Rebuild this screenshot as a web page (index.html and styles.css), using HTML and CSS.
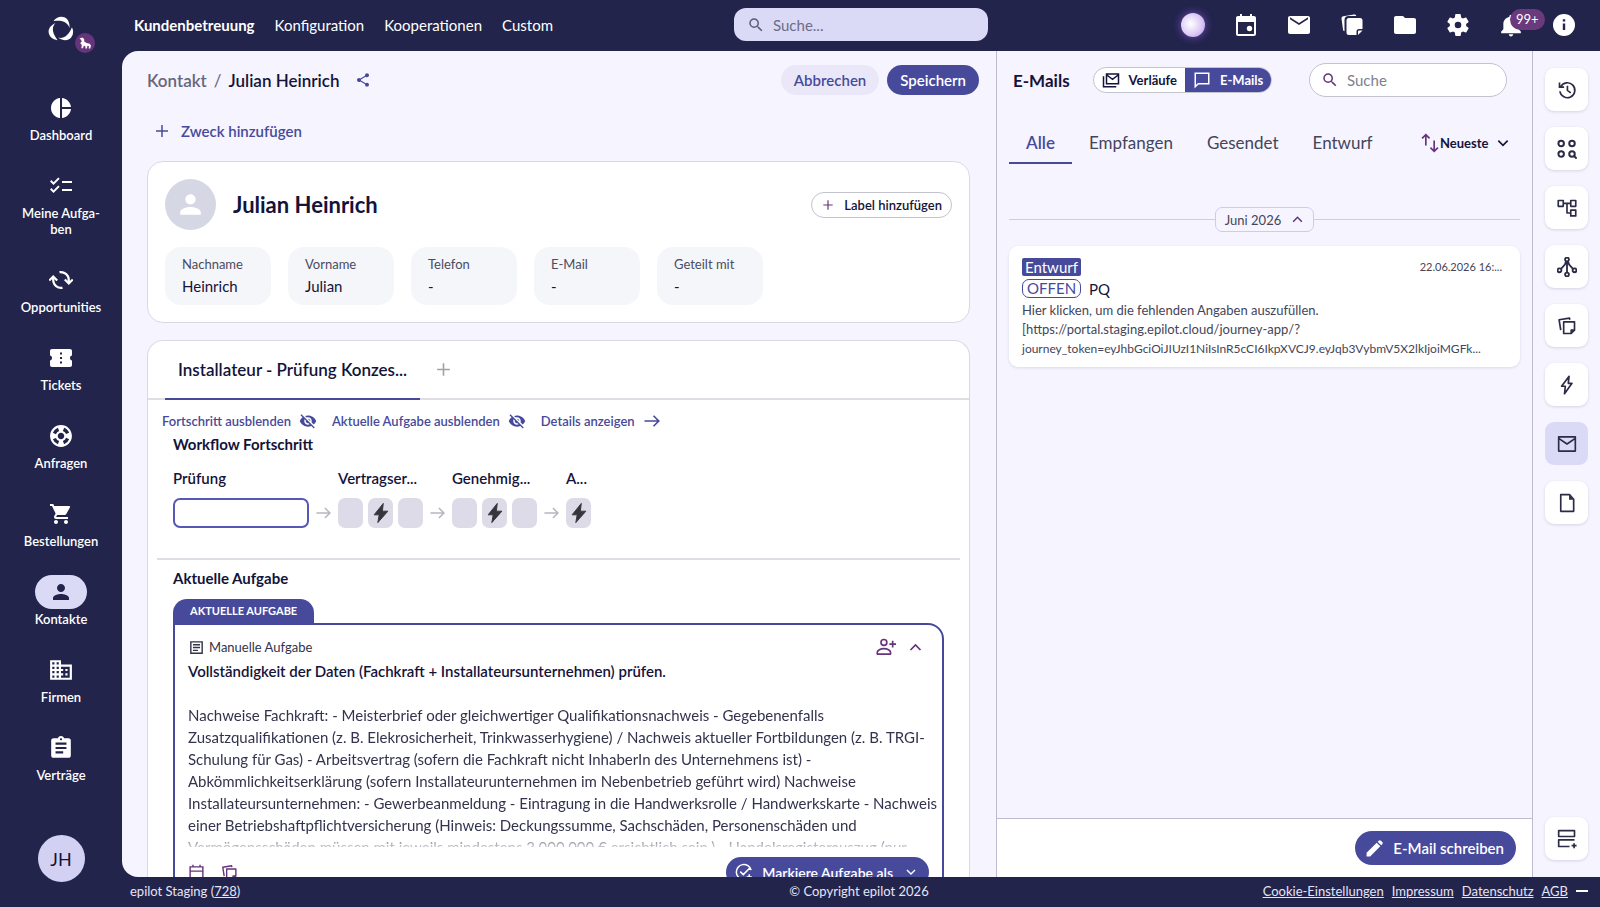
FILE: index.html
```html
<!DOCTYPE html>
<html lang="de">

<head>
    <meta charset="UTF-8">
    <meta name="viewport" content="width=device-width, initial-scale=1.0">
    <title>Julian Heinrich</title>

    <link rel="stylesheet" href="styles.css">
</head>

<body>

    <!-- Icons -->
    <svg class="sprite" aria-hidden="true">
        <symbol id="i-pie" viewBox="0 0 24 24"><path d="M11 2v20c-5.07-.5-9-4.79-9-10s3.93-9.5 9-10zm2.03 0v8.99H22c-.47-4.74-4.24-8.52-8.97-8.99zm0 11.01V22c4.74-.47 8.5-4.25 8.97-8.99h-8.97z"/></symbol>
        <symbol id="i-checklist" viewBox="0 0 24 24"><path d="M23 7h-10v2h10V7zm0 8h-10v2h10v-2zM4.540 11L1 7.460l1.410-1.410 2.120 2.120 4.740-4.740 1.410 1.410L4.540 11zm0 8L1 15.460l1.410-1.410 2.120 2.120 4.740-4.740 1.410 1.410L4.540 19z"/></symbol>
        <symbol id="i-sync" viewBox="0 0 24 24"><path fill="none" stroke="currentColor" stroke-width="2.200" d="M10.500 4.200A8 8 0 0 1 19.800 12v3M15.800 11.500l4 4 4-4M13.500 19.800A8 8 0 0 1 4.200 12V9M.2 12.500l4-4 4 4"/></symbol>
        <symbol id="i-ticket" viewBox="0 0 24 24"><path d="M23 9.500V5c0-1.100-.9-2-2-2H3c-1.100 0-2 .9-2 2v4.500c1.100 0 2 1.100 2 2.500s-.9 2.500-2 2.500V19c0 1.100.9 2 2 2h18c1.100 0 2-.9 2-2v-4.500c-1.100 0-2-1.100-2-2.500s.9-2.500 2-2.500zM13 17.500h-2v-2h2v2zm0-4.500h-2v-2h2v2zm0-4.500h-2v-2h2v2z"/></symbol>
        <symbol id="i-support" viewBox="1 1 22 22"><path fill-rule="evenodd" d="M12 2C6.480 2 2 6.480 2 12s4.480 10 10 10 10-4.480 10-10S17.520 2 12 2zm7.460 7.120l-2.780 1.150a4.980 4.980 0 0 0-2.950-2.940l1.150-2.780c2.100.8 3.770 2.470 4.580 4.570zM12 15c-1.660 0-3-1.340-3-3s1.340-3 3-3 3 1.340 3 3-1.340 3-3 3zM9.130 4.540l1.170 2.780a5 5 0 0 0-2.980 2.970L4.540 9.130a7.980 7.980 0 0 1 4.590-4.590zM4.540 14.870l2.780-1.150a4.970 4.970 0 0 0 2.970 2.960l-1.170 2.780a7.990 7.990 0 0 1-4.580-4.590zm10.340 4.590l-1.150-2.780a4.980 4.980 0 0 0 2.950-2.970l2.780 1.170a8.010 8.010 0 0 1-4.580 4.580z"/></symbol>
        <symbol id="i-cart" viewBox="0 0 24 24"><path d="M7 18c-1.100 0-1.990.9-1.990 2S5.900 22 7 22s2-.9 2-2-.9-2-2-2zM1 2v2h2l3.600 7.590-1.350 2.450c-.16.28-.25.61-.25.96 0 1.100.9 2 2 2h12v-2H7.420c-.14 0-.25-.11-.25-.25l.03-.12.9-1.630h7.450c.75 0 1.410-.41 1.750-1.030l3.580-6.490A1 1 0 0 0 20 4H5.210l-.94-2H1zm16 16c-1.100 0-1.990.9-1.990 2s.89 2 1.990 2 2-.9 2-2-.9-2-2-2z"/></symbol>
        <symbol id="i-person" viewBox="0 0 24 24"><path d="M12 12c2.210 0 4-1.790 4-4s-1.790-4-4-4-4 1.790-4 4 1.790 4 4 4zm0 2c-2.670 0-8 1.340-8 4v2h16v-2c0-2.660-5.330-4-8-4z"/></symbol>
        <symbol id="i-building" viewBox="1 1 22 22"><path d="M12 7V3H2v18h20V7H12zM6 19H4v-2h2v2zm0-4H4v-2h2v2zm0-4H4V9h2v2zm0-4H4V5h2v2zm4 12H8v-2h2v2zm0-4H8v-2h2v2zm0-4H8V9h2v2zm0-4H8V5h2v2zm10 12h-8v-2h2v-2h-2v-2h2v-2h-2V9h8v10zm-2-8h-2v2h2v-2zm0 4h-2v2h2v-2z"/></symbol>
        <symbol id="i-clipboard" viewBox="1 1 22 22"><path d="M19 3h-4.180C14.400 1.840 13.300 1 12 1s-2.400.84-2.820 2H5c-1.100 0-2 .9-2 2v14c0 1.100.9 2 2 2h14c1.100 0 2-.9 2-2V5c0-1.100-.9-2-2-2zm-7 0c.55 0 1 .45 1 1s-.45 1-1 1-1-.45-1-1 .45-1 1-1zm2 14H7v-2h7v2zm3-4H7v-2h10v2zm0-4H7V7h10v2z"/></symbol>
        <symbol id="i-search" viewBox="0 0 24 24"><path d="M15.500 14h-.79l-.28-.27A6.470 6.470 0 0 0 16 9.500 6.500 6.500 0 1 0 9.500 16c1.610 0 3.090-.59 4.230-1.570l.27.28v.79l5 4.990L20.490 19l-4.990-5zm-6 0C7.010 14 5 11.990 5 9.500S7.010 5 9.500 5 14 7.010 14 9.500 11.990 14 9.500 14z"/></symbol>
        <symbol id="i-event" viewBox="0 0 24 24"><path d="M20 3h-2V1h-2v2H8V1H6v2H4c-1.100 0-2 .9-2 2v16c0 1.100.9 2 2 2h16c1.100 0 2-.9 2-2V5c0-1.100-.9-2-2-2zm0 18H4V9h16v12z"/><circle cx="15.500" cy="15.500" r="2.700"/></symbol>
        <symbol id="i-mail" viewBox="0 0 24 24"><path d="M21 3H3C1.900 3 1 3.900 1 5v14c0 1.100.9 2 2 2h18c1.100 0 2-.9 2-2V5c0-1.100-.9-2-2-2zm0 3.200l-9 5.800-9-5.800V4.300l9 5.800 9-5.800v1.900z"/></symbol>
        <symbol id="i-notes" viewBox="0 0 24 24"><path d="M1.500 5.500c0-1.200.6-2 1.800-2.200L14 1.500c1.200-.2 2.100.4 2.300 1.500H8.500A4 4 0 0 0 4.500 7v11.200c-.9-.1-1.300-.7-1.500-1.700z"/><path d="M9 5h11a2.500 2.500 0 0 1 2.500 2.500V16H19a2.500 2.500 0 0 0-2.500 2.500V22H9a2.500 2.500 0 0 1-2.500-2.500v-12A2.500 2.500 0 0 1 9 5z"/><path d="M18 22v-3.500a1 1 0 0 1 1-1h3.500z"/></symbol>
        <symbol id="i-folder" viewBox="0 0 24 24"><path d="M10 3H3c-1.100 0-2 .9-2 2v14c0 1.100.9 2 2 2h18c1.100 0 2-.9 2-2V7c0-1.100-.9-2-2-2h-9l-2-2z"/></symbol>
        <symbol id="i-gear" viewBox="1 1 22 22"><path d="M19.430 12.980c.04-.32.07-.64.07-.98s-.03-.66-.07-.98l2.110-1.650c.19-.15.24-.42.12-.64l-2-3.460c-.12-.22-.39-.3-.61-.22l-2.490 1c-.52-.4-1.080-.73-1.690-.98l-.38-2.650A.49.49 0 0 0 14 2h-4c-.25 0-.46.18-.49.42l-.38 2.650c-.61.25-1.170.59-1.690.98l-2.490-1c-.23-.09-.49 0-.61.22l-2 3.460c-.13.22-.07.49.12.64l2.110 1.650c-.04.32-.07.65-.07.98s.03.66.07.98l-2.110 1.650c-.19.15-.24.42-.12.64l2 3.460c.12.22.39.3.61.22l2.490-1c.52.4 1.080.73 1.690.98l.38 2.650c.03.24.24.42.49.42h4c.25 0 .46-.18.49-.42l.38-2.650c.61-.25 1.170-.59 1.690-.98l2.490 1c.23.09.49 0 .61-.22l2-3.460c.12-.22.07-.49-.12-.64l-2.110-1.650zM12 15a3 3 0 1 1 0-6 3 3 0 0 1 0 6z"/></symbol>
        <symbol id="i-bell" viewBox="1 1 22 22"><path d="M12 22.500c1.100 0 2-.9 2-2h-4c0 1.100.89 2 2 2zm7-6.500v-5c0-3.070-2.140-5.640-5.500-6.320V4c0-.83-.67-1.500-1.500-1.500s-1.500.67-1.500 1.500v.68C7.130 5.360 5 7.920 5 11v5l-2 2v1.500h18V18l-2-2z"/></symbol>
        <symbol id="i-info" viewBox="0 0 24 24"><path d="M12 1a11 11 0 1 0 0 22 11 11 0 0 0 0-22zm1.200 16h-2.400v-6.500h2.400V17zm0-8.500h-2.400V6.200h2.400v2.300z"/></symbol>
        <symbol id="i-share" viewBox="0 0 24 24"><path d="M18 16.080c-.76 0-1.440.3-1.960.77L8.910 12.700c.05-.23.09-.46.09-.7s-.04-.47-.09-.7l7.050-4.110c.54.5 1.250.81 2.040.81 1.660 0 3-1.340 3-3s-1.340-3-3-3-3 1.340-3 3c0 .24.04.47.09.7L8.040 9.810C7.500 9.310 6.790 9 6 9c-1.660 0-3 1.340-3 3s1.340 3 3 3c.79 0 1.500-.31 2.040-.81l7.120 4.160c-.05.21-.08.43-.08.65 0 1.610 1.310 2.920 2.920 2.920s2.920-1.310 2.920-2.920-1.310-2.920-2.920-2.920z"/></symbol>
        <symbol id="i-plus" viewBox="0 0 24 24"><path d="M20 13h-7v7h-2v-7H4v-2h7V4h2v7h7v2z"/></symbol>
        <symbol id="i-eye-off" viewBox="0 0 24 24"><path d="M12 7c2.760 0 5 2.240 5 5 0 .65-.13 1.260-.36 1.830l2.920 2.920c1.510-1.260 2.700-2.890 3.430-4.750-1.730-4.390-6-7.500-11-7.500-1.400 0-2.740.25-3.980.7l2.160 2.160C10.740 7.130 11.350 7 12 7zM2 4.270l2.280 2.280.46.46A11.800 11.800 0 0 0 1 12c1.730 4.390 6 7.500 11 7.500 1.550 0 3.030-.3 4.380-.84l.42.42L19.730 22 21 20.730 3.270 3 2 4.270zM7.530 9.800l1.550 1.550c-.05.21-.08.43-.08.65 0 1.660 1.340 3 3 3 .22 0 .44-.03.65-.08l1.550 1.550c-.67.33-1.410.53-2.200.53-2.760 0-5-2.240-5-5 0-.79.2-1.530.53-2.200zm4.310-.78l3.150 3.150.02-.16c0-1.660-1.340-3-3-3l-.17.01z"/></symbol>
        <symbol id="i-arrow" viewBox="0 0 24 24"><path fill="none" stroke="currentColor" stroke-width="2.200" d="M2 12h19M14 5l7 7-7 7"/></symbol>
        <symbol id="i-up" viewBox="0 0 24 24"><path fill="none" stroke="currentColor" stroke-width="2.800" d="M4 16l8-8 8 8"/></symbol>
        <symbol id="i-down" viewBox="0 0 24 24"><path fill="none" stroke="currentColor" stroke-width="2.800" d="M4 8l8 8 8-8"/></symbol>
        <symbol id="i-bolt" viewBox="0 0 24 24"><path stroke="currentColor" stroke-linejoin="round" d="M14.500 1.500L4.500 14h5.500l-1.500 8.500L19.500 10H13.500z"/></symbol>
        <symbol id="i-article" viewBox="0 0 24 24"><path fill="none" stroke="currentColor" stroke-width="2" d="M4 4h16v16H4zM7 8h10M7 12h10M7 16h7"/></symbol>
        <symbol id="i-person-add" viewBox="0 0 24 24"><path fill="none" stroke="currentColor" stroke-width="2" stroke-linejoin="round" d="M9.500 3a3.500 3.500 0 1 1 0 7 3.500 3.500 0 0 1 0-7zM1.500 20.500v-2c0-2.700 4-4.500 8-4.500s8 1.800 8 4.500v2zM20 4.500v8M16 8.500h8"/></symbol>
        <symbol id="i-copy" viewBox="0 0 24 24"><path fill="none" stroke="currentColor" stroke-width="2" stroke-linejoin="round" d="M8 7h13v10l-4 4H8zM17 21v-4h4M4.500 17L2.500 4.500 15 2.500l.4 2"/></symbol>
        <symbol id="i-cal-line" viewBox="0 0 24 24"><path fill="none" stroke="currentColor" stroke-width="2" d="M3 4h18v17H3zM3 10h18M7 1v3M17 1v3"/></symbol>
        <symbol id="i-task" viewBox="0 0 24 24"><path fill="none" stroke="currentColor" stroke-width="2" d="M21.500 9.500A10 10 0 1 0 12 22M7 11.500l4 4L20.500 6M19 15v7M15.500 18.500h7"/></symbol>
        <symbol id="i-mails" viewBox="0 0 24 24"><path fill="none" stroke="currentColor" stroke-width="2" d="M6 4h16v13H6zM6 5l8 6 8-6M2 7v14h17"/></symbol>
        <symbol id="i-chat" viewBox="0 0 24 24"><path fill="none" stroke="currentColor" stroke-width="2" d="M3 3h18v14H7l-4 4z"/></symbol>
        <symbol id="i-sort" viewBox="0 0 24 24"><path fill="none" stroke="currentColor" stroke-width="2" d="M7 15V2M2.500 6.500L7 2l4.500 4.500M17 9v13M12.500 17.500L17 22l4.500-4.500"/></symbol>
        <symbol id="i-history" viewBox="0 0 24 24"><path fill="none" stroke="currentColor" stroke-width="2" d="M4.500 8a9 9 0 1 1-1 5.500M3 3v5.500h5.500M12.500 7v5.500l4 3"/></symbol>
        <symbol id="i-apps" viewBox="0 0 24 24"><g fill="none" stroke="currentColor" stroke-width="2.400"><circle cx="5" cy="5.500" r="3.300"/><circle cx="18" cy="5.500" r="3.300"/><circle cx="5" cy="18" r="3.300"/><circle cx="18" cy="18" r="3.300"/><path d="M20 20l3.500 3.500"/></g></symbol>
        <symbol id="i-tree" viewBox="0 0 24 24"><path fill="none" stroke="currentColor" stroke-width="2" stroke-linejoin="round" d="M1.500 3h6v7h-6zM16.500 3h6v7h-6zM16.500 14.500h6v7h-6zM7.500 6.500h9M12 6.500V18h4.500"/></symbol>
        <symbol id="i-hub" viewBox="0 0 24 24"><g fill="none" stroke="currentColor" stroke-width="2.200"><circle cx="12" cy="3" r="2.300"/><circle cx="3" cy="16" r="2.300"/><circle cx="12" cy="21" r="2.300"/><circle cx="21" cy="16" r="2.300"/><path d="M12 5v14M11 5L9.500 9l-5 5.500M13 5l1.500 4 5 5.500"/></g></symbol>
        <symbol id="i-bolt-line" viewBox="0 0 24 24"><path fill="none" stroke="currentColor" stroke-width="2" stroke-linejoin="round" d="M14.500 1.500L5.500 13.500H10L9 22.500l9-12.500H13.500z"/></symbol>
        <symbol id="i-mail-line" viewBox="0 0 24 24"><path fill="none" stroke="currentColor" stroke-width="2" stroke-linejoin="round" d="M2 3.500h20v17H2zM2.500 5.500L12 12l9.500-6.500"/></symbol>
        <symbol id="i-file" viewBox="0 0 24 24"><path fill="none" stroke="currentColor" stroke-width="2" stroke-linejoin="round" d="M4.500 2h10.500l5 5.500v14.500H4.500z"/><path d="M14.500 2.500V8h5z"/></symbol>
        <symbol id="i-blocks" viewBox="0 0 24 24"><path fill="none" stroke="currentColor" stroke-width="2" stroke-linejoin="round" d="M2 2h19v7H2zM21 13H2v8h13M20.500 17v6M17.500 20h6"/></symbol>
        <symbol id="i-pen" viewBox="0 0 24 24"><path d="M2 17.500V22h4.500L19.300 9.200l-4.500-4.500L2 17.500zM21.800 3.800l-1.600-1.600a2 2 0 0 0-2.800 0L16 3.600 20.400 8l1.400-1.400a2 2 0 0 0 0-2.800z"/></symbol>
    </svg>

    <div class="app">
        <aside class="sidebar">
            <div class="logo">
                <svg class="logo-mark" viewBox="0 0 26 26">
                    <path id="blade" d="M5.500 5.200C9.500-1.800 22.500-1.500 21.500 12 19.800 6.500 14.500 3.800 5.500 5.200z"/>
                    <use href="#blade" transform="rotate(120 13 13.500)"/>
                    <use href="#blade" transform="rotate(240 13 13.500)"/>
                </svg>
                <span class="logo-badge">
                    <svg viewBox="0 0 20 20"><path d="M3 4.500L6.500 3 9 5v3l3 2 4 1 1.500 2.500-1 3.500h-2l.5-3-2-.5-.5 3.500h-2V14l-2-.5-1 3h-2l.5-4L4 10l2-2-1-2z"/></svg>
                </span>
            </div>
            <nav class="side-nav">
                <a href="#" class="side-item"><span class="side-icon"><svg><use href="#i-pie"/></svg></span>Dashboard</a>
                <a href="#" class="side-item"><span class="side-icon"><svg><use href="#i-checklist"/></svg></span>Meine Aufga&shy;ben</a>
                <a href="#" class="side-item"><span class="side-icon"><svg><use href="#i-sync"/></svg></span>Opportunities</a>
                <a href="#" class="side-item"><span class="side-icon"><svg><use href="#i-ticket"/></svg></span>Tickets</a>
                <a href="#" class="side-item"><span class="side-icon"><svg><use href="#i-support"/></svg></span>Anfragen</a>
                <a href="#" class="side-item"><span class="side-icon"><svg><use href="#i-cart"/></svg></span>Bestellungen</a>
                <a href="#" class="side-item active"><span class="side-icon"><svg><use href="#i-person"/></svg></span>Kontakte</a>
                <a href="#" class="side-item"><span class="side-icon"><svg><use href="#i-building"/></svg></span>Firmen</a>
                <a href="#" class="side-item"><span class="side-icon"><svg><use href="#i-clipboard"/></svg></span>Verträge</a>
            </nav>
            <button class="user">JH</button>
        </aside>

        <div class="shell">
            <header class="topbar">
                <nav class="top-nav">
                    <a href="#" class="active">Kundenbetreuung</a>
                    <a href="#">Konfiguration</a>
                    <a href="#">Kooperationen</a>
                    <a href="#">Custom</a>
                </nav>
                <label class="top-search">
                    <svg><use href="#i-search"/></svg>
                    <input type="text" placeholder="Suche..." aria-label="Suche">
                </label>
                <div class="top-icons">
                    <button class="orb" aria-label="Assistent"></button>
                    <button aria-label="Kalender"><svg><use href="#i-event"/></svg></button>
                    <button aria-label="E-Mail"><svg><use href="#i-mail"/></svg></button>
                    <button aria-label="Notizen"><svg><use href="#i-notes"/></svg></button>
                    <button aria-label="Dateien"><svg><use href="#i-folder"/></svg></button>
                    <button aria-label="Einstellungen"><svg><use href="#i-gear"/></svg></button>
                    <button class="bell" aria-label="Benachrichtigungen"><svg><use href="#i-bell"/></svg><span class="count">99+</span></button>
                    <button aria-label="Hilfe"><svg><use href="#i-info"/></svg></button>
                </div>
            </header>

            <div class="workspace">
                <main class="content">
                    <div class="page-head">
                        <div class="breadcrumb">
                            <a href="#">Kontakt</a>
                            <span class="slash">/</span>
                            <strong>Julian Heinrich</strong>
                            <button aria-label="Teilen"><svg><use href="#i-share"/></svg></button>
                        </div>
                        <button class="btn btn-light">Abbrechen</button>
                        <button class="btn btn-primary">Speichern</button>
                    </div>
                    <button class="add-purpose"><svg><use href="#i-plus"/></svg>Zweck hinzufügen</button>

                    <section class="card contact">
                        <div class="contact-head">
                            <span class="avatar"><svg><use href="#i-person"/></svg></span>
                            <h1>Julian Heinrich</h1>
                            <button class="add-label"><svg><use href="#i-plus"/></svg>Label hinzufügen</button>
                        </div>
                        <dl class="fields">
                            <div><dt>Nachname</dt><dd>Heinrich</dd></div>
                            <div><dt>Vorname</dt><dd>Julian</dd></div>
                            <div><dt>Telefon</dt><dd>-</dd></div>
                            <div><dt>E-Mail</dt><dd>-</dd></div>
                            <div><dt>Geteilt mit</dt><dd>-</dd></div>
                        </dl>
                    </section>

                    <section class="card workflow">
                        <div class="workflow-tabs">
                            <button class="tab-active">Installateur - Prüfung Konzes...</button>
                            <button class="tab-add" aria-label="Workflow hinzufügen"><svg><use href="#i-plus"/></svg></button>
                        </div>
                        <div class="workflow-links">
                            <button>Fortschritt ausblenden<svg><use href="#i-eye-off"/></svg></button>
                            <button>Aktuelle Aufgabe ausblenden<svg><use href="#i-eye-off"/></svg></button>
                            <button>Details anzeigen<svg><use href="#i-arrow"/></svg></button>
                        </div>
                        <div class="progress">
                            <h2>Workflow Fortschritt</h2>
                            <div class="phases">
                                <div class="phase">
                                    <h3>Prüfung</h3>
                                    <div class="steps"><span class="step current"></span></div>
                                </div>
                                <svg class="next"><use href="#i-arrow"/></svg>
                                <div class="phase">
                                    <h3>Vertragser...</h3>
                                    <div class="steps"><span class="step"></span><span class="step"><svg><use href="#i-bolt"/></svg></span><span class="step"></span></div>
                                </div>
                                <svg class="next"><use href="#i-arrow"/></svg>
                                <div class="phase">
                                    <h3>Genehmig...</h3>
                                    <div class="steps"><span class="step"></span><span class="step"><svg><use href="#i-bolt"/></svg></span><span class="step"></span></div>
                                </div>
                                <svg class="next"><use href="#i-arrow"/></svg>
                                <div class="phase">
                                    <h3>A...</h3>
                                    <div class="steps"><span class="step"><svg><use href="#i-bolt"/></svg></span></div>
                                </div>
                            </div>
                        </div>
                        <div class="current-task">
                            <h2>Aktuelle Aufgabe</h2>
                            <span class="task-tag">AKTUELLE AUFGABE</span>
                            <article class="task">
                                <div class="task-head">
                                    <svg class="task-type"><use href="#i-article"/></svg>
                                    <span>Manuelle Aufgabe</span>
                                    <button aria-label="Zuweisen"><svg><use href="#i-person-add"/></svg></button>
                                    <button aria-label="Einklappen"><svg class="caret"><use href="#i-up"/></svg></button>
                                </div>
                                <h4>Vollständigkeit der Daten (Fachkraft + Installateursunternehmen) prüfen.</h4>
                                <p class="task-text">Nachweise Fachkraft: - Meisterbrief oder gleichwertiger Qualifikationsnachweis - Gegebenenfalls<br>Zusatzqualifikationen (z. B. Elekrosicherheit, Trinkwasserhygiene) / Nachweis aktueller Fortbildungen (z. B. TRGI-<br>Schulung für Gas) - Arbeitsvertrag (sofern die Fachkraft nicht InhaberIn des Unternehmens ist) -<br>Abkömmlichkeitserklärung (sofern Installateurunternehmen im Nebenbetrieb geführt wird) Nachweise<br>Installateursunternehmen: - Gewerbeanmeldung - Eintragung in die Handwerksrolle / Handwerkskarte - Nachweis<br>einer Betriebshaftpflichtversicherung (Hinweis: Deckungssumme, Sachschäden, Personenschäden und<br>Vermögensschäden müssen mit jeweils mindestens 3.000.000 € ersichtlich sein.) - Handelsregisterauszug (nur</p>
                                <div class="task-foot">
                                    <button class="task-action" aria-label="Fälligkeit"><svg><use href="#i-cal-line"/></svg></button>
                                    <button class="task-action" aria-label="Notiz"><svg><use href="#i-copy"/></svg></button>
                                    <button class="btn btn-primary mark"><svg><use href="#i-task"/></svg>Markiere Aufgabe als<svg class="caret"><use href="#i-down"/></svg></button>
                                </div>
                            </article>
                        </div>
                    </section>
                </main>

                <section class="mails">
                    <div class="mails-body">
                        <div class="mails-head">
                            <h2>E-Mails</h2>
                            <div class="toggle">
                                <button><svg><use href="#i-mails"/></svg>Verläufe</button>
                                <button class="on"><svg><use href="#i-chat"/></svg>E-Mails</button>
                            </div>
                            <label class="mail-search">
                                <svg><use href="#i-search"/></svg>
                                <input type="text" placeholder="Suche" aria-label="E-Mails durchsuchen">
                            </label>
                        </div>
                        <div class="mail-tabs">
                            <button class="on">Alle</button>
                            <button>Empfangen</button>
                            <button>Gesendet</button>
                            <button>Entwurf</button>
                            <label class="sort">
                                <svg class="sort-icon"><use href="#i-sort"/></svg>
                                <select aria-label="Sortierung">
                                    <option>Neueste</option>
                                </select>
                                <svg class="sort-caret"><use href="#i-down"/></svg>
                            </label>
                        </div>
                        <div class="month">
                            <button>Juni 2026<svg><use href="#i-up"/></svg></button>
                        </div>
                        <article class="mail">
                            <div class="mail-row">
                                <span class="draft">Entwurf</span>
                                <time>22.06.2026 16:...</time>
                            </div>
                            <div class="mail-row">
                                <span class="open">OFFEN</span>
                                <span class="subject">PQ</span>
                            </div>
                            <p>Hier klicken, um die fehlenden Angaben auszufüllen.<br>[https://portal.staging.epilot.cloud/journey-app/?</p>
                            <p class="token">journey_token=eyJhbGciOiJIUzI1NiIsInR5cCI6IkpXVCJ9.eyJqb3VybmV5X2lkIjoiMGFk...</p>
                        </article>
                    </div>
                    <div class="compose">
                        <button class="btn btn-primary"><svg><use href="#i-pen"/></svg>E-Mail schreiben</button>
                    </div>
                </section>

                <aside class="rail">
                    <button aria-label="Verlauf"><svg><use href="#i-history"/></svg></button>
                    <button aria-label="Entitäten"><svg><use href="#i-apps"/></svg></button>
                    <button aria-label="Workflows"><svg><use href="#i-tree"/></svg></button>
                    <button aria-label="Beziehungen"><svg><use href="#i-hub"/></svg></button>
                    <button aria-label="Notizen"><svg><use href="#i-copy"/></svg></button>
                    <button aria-label="Automatisierungen"><svg><use href="#i-bolt-line"/></svg></button>
                    <button class="on" aria-label="E-Mails"><svg><use href="#i-mail-line"/></svg></button>
                    <button aria-label="Dokumente"><svg><use href="#i-file"/></svg></button>
                    <button class="rail-last" aria-label="Blöcke anpassen"><svg><use href="#i-blocks"/></svg></button>
                </aside>
            </div>

            <footer class="footer">
                <span>epilot Staging (<a href="#">728</a>)</span>
                <span class="copyright">© Copyright epilot 2026</span>
                <nav>
                    <a href="#">Cookie-Einstellungen</a>
                    <a href="#">Impressum</a>
                    <a href="#">Datenschutz</a>
                    <a href="#">AGB</a>
                    <button class="minimize" aria-label="Minimieren"></button>
                </nav>
            </footer>
        </div>
    </div>

</body>

</html>
```
FILE: styles.css
```css
:root {
    --navy: #22244c;
    --primary: #474a9b;
    --purple: #66347a;
    --bg: #f5f4ff;
    --lilac: #dadaf6;
    --ink: #14133a;
    --line: #d9d9e6;
}

* {
    box-sizing: border-box;
}

body {
    margin: 0;
    font-family: "Lato", "Liberation Sans", sans-serif;
    font-size: 16px;
    color: var(--ink);
    background: var(--navy);
}

h1, h2, h3, h4, p, dl, dd {
    margin: 0;
}

button, input, select {
    font: inherit;
    color: inherit;
    background: none;
    border: none;
    padding: 0;
}

button {
    display: flex;
    align-items: center;
    cursor: pointer;
    white-space: nowrap;
}

input {
    outline: none;
    min-width: 0;
    width: 100%;
}

a {
    color: inherit;
    text-decoration: none;
}

svg {
    display: block;
    flex: none;
    width: 24px;
    height: 24px;
    fill: currentColor;
}

.sprite {
    position: absolute;
    width: 0;
    height: 0;
}

.app {
    display: flex;
    height: 100vh;
    overflow: hidden;
}

/* Sidebar */
.sidebar {
    display: flex;
    flex-direction: column;
    flex: none;
    width: 122px;
    padding-bottom: 25px;
    color: #fff;
}

.logo {
    position: relative;
    display: flex;
    justify-content: center;
    height: 91px;
    padding-top: 16px;
}

.logo-mark {
    width: 26px;
    height: 26px;
}

.logo-badge {
    position: absolute;
    left: 75px;
    top: 33px;
    padding: 2px;
    border-radius: 50%;
    background: var(--purple);
}

.logo-badge svg {
    width: 16px;
    height: 16px;
}

.side-nav {
    display: flex;
    flex-direction: column;
    flex: 1;
    gap: 26px;
    overflow: hidden;
}

.side-item {
    display: flex;
    flex-direction: column;
    align-items: center;
    gap: 2px;
    padding: 0 20px;
    font-size: 13px;
    line-height: 16px;
    font-weight: 600;
    text-align: center;
    hyphens: manual;
}

.side-icon {
    padding: 5px 14px;
    border-radius: 17px;
}

.active .side-icon {
    background: var(--lilac);
    color: var(--navy);
}

.user {
    justify-content: center;
    align-self: center;
    flex: none;
    width: 47px;
    height: 47px;
    border-radius: 50%;
    background: #d3d1f3;
    color: var(--ink);
    font-size: 18px;
}

.shell {
    display: flex;
    flex-direction: column;
    flex: 1;
    min-width: 0;
}

/* Topbar */
.topbar {
    display: grid;
    grid-template-columns: 612px 254px 1fr;
    align-items: center;
    flex: none;
    height: 51px;
    padding: 0 24px 2px 0;
    color: #fff;
}

.top-nav {
    display: flex;
    gap: 20px;
    padding-left: 12px;
    font-size: 15px;
}

.top-nav .active {
    font-weight: 700;
}

.top-search {
    display: flex;
    align-items: center;
    gap: 8px;
    height: 33px;
    padding: 0 13px;
    border-radius: 12px;
    background: var(--lilac);
    color: #5c5c77;
    font-size: 15px;
}

.top-search svg {
    width: 18px;
    height: 18px;
}

.top-search input::placeholder {
    color: #6c6c88;
    opacity: 1;
}

.top-icons {
    display: flex;
    justify-content: flex-end;
    gap: 29px;
}

.orb {
    width: 24px;
    height: 24px;
    border-radius: 50%;
    background: radial-gradient(circle at 40% 45%, #fff, #dccbf5 55%, #b08fdc);
    box-shadow: 0 0 8px #7a4fc0;
}

.bell {
    position: relative;
}

.count {
    position: absolute;
    left: 11px;
    top: -4px;
    padding: 0 6px;
    border-radius: 11px;
    background: #6b3a7d;
    font-size: 13px;
    line-height: 21px;
}

/* Workspace */
.workspace {
    display: flex;
    flex: 1;
    min-height: 0;
    overflow: hidden;
    border-radius: 16px 0 0 16px;
    background: var(--bg);
}

.content {
    display: flex;
    flex-direction: column;
    flex: 1;
    min-width: 0;
    padding: 14px 17px 0 25px;
    overflow: hidden;
}

.page-head {
    display: flex;
    align-items: center;
    gap: 8px;
    height: 30px;
}

.breadcrumb {
    display: flex;
    align-items: center;
    flex: 1;
    gap: 7px;
    font-size: 17px;
    font-weight: 600;
    color: #66667a;
}

.breadcrumb strong {
    font-weight: 600;
    color: var(--ink);
}

.slash {
    font-weight: 400;
}

.breadcrumb button {
    margin-left: 9px;
    color: var(--primary);
}

.breadcrumb svg {
    width: 16px;
    height: 16px;
}

.btn {
    justify-content: center;
    height: 30px;
    padding: 0 13px;
    border-radius: 17px;
    font-size: 15px;
    font-weight: 600;
}

.btn-light {
    background: #eae8f8;
    color: var(--primary);
}

.btn-primary {
    background: var(--primary);
    color: #fff;
}

.add-purpose {
    gap: 10px;
    align-self: flex-start;
    margin: 26px 0 20px;
    padding-left: 6px;
    color: var(--primary);
    font-size: 15px;
    font-weight: 600;
    line-height: 20px;
}

.add-purpose svg {
    width: 18px;
    height: 18px;
}

.card {
    flex: none;
    margin-right: 9px;
    border: 1px solid var(--line);
    border-radius: 16px;
    background: #fff;
}

.contact {
    padding: 17px;
    margin-bottom: 17px;
}

.contact-head {
    display: flex;
    align-items: center;
    gap: 17px;
    margin-bottom: 17px;
}

.avatar {
    padding: 10px;
    border-radius: 50%;
    background: #d5d8e4;
    color: #fff;
}

.avatar svg {
    width: 31px;
    height: 31px;
}

h1 {
    flex: 1;
    font-size: 22px;
    font-weight: 700;
}

.add-label {
    gap: 9px;
    height: 26px;
    padding: 0 9px;
    border: 1px solid #c3c3cd;
    border-radius: 13px;
    font-size: 13px;
    font-weight: 600;
}

.add-label svg {
    width: 14px;
    height: 14px;
    color: var(--purple);
}

.fields {
    display: flex;
    gap: 17px;
}

.fields div {
    width: 106px;
    height: 58px;
    padding: 8px 0 0 17px;
    border-radius: 16px;
    background: #f4f6f9;
}

dt {
    font-size: 13px;
    line-height: 18px;
    color: #4b4b62;
}

dd {
    font-size: 15px;
    line-height: 26px;
}

/* Workflow */
.workflow {
    border-bottom: none;
    border-radius: 16px 16px 0 0;
}

.workflow-tabs {
    display: flex;
    height: 59px;
    padding-left: 17px;
    border-bottom: 2px solid #dedee4;
}

.tab-active {
    height: 59px;
    padding: 0 13px;
    border-bottom: 2px solid var(--primary);
    font-size: 17px;
    font-weight: 600;
}

.tab-add {
    margin-left: 14px;
    color: #a0a0ac;
}

.tab-add svg {
    width: 19px;
    height: 19px;
}

.workflow-links {
    display: flex;
    gap: 15px;
    padding: 12px 14px 4px;
    color: var(--primary);
    font-size: 13px;
    font-weight: 600;
    line-height: 18px;
}

.workflow-links button {
    gap: 8px;
}

.workflow-links svg {
    width: 18px;
    height: 18px;
}

.workflow h2 {
    font-size: 15px;
    line-height: 20px;
    font-weight: 700;
}

.progress {
    margin: 0 9px;
    padding: 0 16px 30px;
    border-bottom: 2px solid #dedee4;
}

.phases {
    display: flex;
    align-items: flex-end;
    gap: 6px;
    margin-top: 14px;
}

.phase h3 {
    font-size: 15px;
    line-height: 20px;
    font-weight: 600;
    white-space: nowrap;
}

.steps {
    display: flex;
    gap: 5px;
    margin-top: 10px;
}

.step {
    display: flex;
    align-items: center;
    justify-content: center;
    width: 25px;
    height: 30px;
    border-radius: 7px;
    background: #dddbe7;
}

.step.current {
    width: 136px;
    border: 2px solid #5558b4;
    background: #fff;
}

.step svg {
    width: 22px;
    height: 22px;
    color: #35353d;
}

.next {
    width: 17px;
    height: 30px;
    color: #b7b7c0;
}

.current-task {
    padding: 8px 25px 0;
}

.task-tag {
    display: inline-block;
    margin-top: 11px;
    padding: 0 17px;
    border-radius: 14px 14px 0 0;
    background: var(--primary);
    color: #fff;
    font-size: 11px;
    line-height: 24px;
    font-weight: 700;
    vertical-align: top;
}

.task {
    padding: 12px 13px 14px;
    border: 2px solid var(--primary);
    border-radius: 0 16px 0 0;
}

.task-head {
    display: flex;
    align-items: center;
    gap: 4px;
    height: 20px;
    margin-right: 6px;
    font-size: 13px;
    color: #33334d;
}

.task-head span {
    flex: 1;
}

.task-head button {
    margin-left: 8px;
    color: var(--purple);
}

.task-head svg {
    width: 20px;
    height: 20px;
}

.task-head .task-type {
    width: 17px;
    height: 17px;
}

.task-head .caret {
    width: 15px;
    height: 15px;
}

.task h4 {
    margin: 3px 0 22px;
    font-size: 15px;
    line-height: 22px;
    font-weight: 600;
}

.task-text {
    height: 143px;
    margin-right: -13px;
    overflow: hidden;
    font-size: 15px;
    line-height: 22px;
    color: #33334d;
    white-space: nowrap;
    mask-image: linear-gradient(#000 128px, rgba(0, 0, 0, .3) 142px);
}

.task-foot {
    display: flex;
    align-items: center;
    gap: 16px;
    margin-top: 10px;
    color: var(--purple);
}

.task-action svg {
    width: 17px;
    height: 17px;
}

.task-foot .mark {
    gap: 9px;
    margin-left: auto;
    padding: 0 9px;
    font-size: 14px;
}

.mark svg {
    width: 18px;
    height: 18px;
}

.mark .caret {
    width: 12px;
    height: 12px;
    margin: 0 3px;
}

/* Mails */
.mails {
    display: flex;
    flex-direction: column;
    flex: none;
    width: 537px;
    border: solid #bcbbcf;
    border-width: 0 1px;
}

.mails-body {
    flex: 1;
    padding: 12px 12px 0;
}

.mails-head {
    display: flex;
    align-items: center;
    padding: 0 13px 0 4px;
}

.mails-head h2 {
    font-size: 17px;
    font-weight: 700;
}

.toggle {
    display: flex;
    height: 26px;
    margin: 0 auto 0 23px;
    border: 1px solid #c3c3cd;
    border-radius: 13px;
    overflow: hidden;
    background: #fff;
    font-size: 13px;
    font-weight: 700;
}

.toggle button {
    gap: 9px;
    padding: 0 8px;
}

.toggle svg {
    width: 18px;
    height: 18px;
}

.toggle .on {
    background: var(--primary);
    color: #fff;
}

.mail-search {
    display: flex;
    align-items: center;
    gap: 8px;
    width: 198px;
    height: 34px;
    padding: 0 11px;
    border: 1px solid #c3c3cd;
    border-radius: 17px;
    background: #fff;
    font-size: 15px;
}

.mail-search svg {
    width: 18px;
    height: 18px;
    color: var(--purple);
}

.mail-search input::placeholder {
    color: #80808f;
    opacity: 1;
}

.mail-tabs {
    display: flex;
    height: 42px;
    margin-top: 25px;
    color: #44445a;
    font-size: 17px;
}

.mail-tabs button {
    padding: 0 17px;
    border-bottom: 2px solid transparent;
}

.mail-tabs .on {
    border-color: var(--primary);
    color: var(--primary);
    font-weight: 600;
}

.sort {
    display: flex;
    align-items: center;
    margin-left: auto;
    padding-right: 10px;
    color: var(--ink);
    font-size: 13px;
    font-weight: 700;
}

.sort select {
    appearance: none;
}

.sort-icon {
    width: 20px;
    height: 20px;
    color: var(--purple);
}

.sort-caret {
    width: 14px;
    height: 14px;
    margin-left: 7px;
}

.month {
    display: flex;
    align-items: center;
    margin: 43px 0 14px;
}

.month::before,
.month::after {
    content: "";
    flex: 1;
    height: 1px;
    background: #cfcde6;
}

.month button {
    gap: 10px;
    height: 25px;
    padding: 0 9px;
    border: 1px solid #cfcbf0;
    border-radius: 7px;
    font-size: 13px;
    color: #44445a;
}

.month svg {
    width: 13px;
    height: 13px;
    color: var(--purple);
}

.mail {
    padding: 12px 13px 9px;
    border-radius: 9px;
    background: #fff;
    box-shadow: 0 1px 3px rgba(34, 36, 76, .12);
}

.mail-row {
    display: flex;
    align-items: center;
    gap: 8px;
    margin-bottom: 3px;
    font-size: 15px;
    line-height: 18px;
}

.draft {
    padding: 0 3px;
    border-radius: 2px;
    background: var(--primary);
    color: #fff;
}

.mail-row time {
    margin-left: auto;
    padding-right: 5px;
    font-size: 11px;
    color: #44445a;
}

.open {
    padding: 0 4px;
    border: 1px solid var(--primary);
    border-radius: 7px;
    line-height: 17px;
    color: var(--primary);
}

.mail p {
    font-size: 13px;
    line-height: 19px;
    color: #44445a;
    white-space: nowrap;
}

.mail .token {
    font-size: 12px;
}

.compose {
    display: flex;
    justify-content: flex-end;
    padding: 12px 16px;
    border-top: 1px solid #bcbbcf;
    background: #fff;
}

.compose .btn {
    gap: 9px;
    height: 34px;
    padding: 0 12px 0 10px;
}

.compose svg {
    width: 19px;
    height: 19px;
}

/* Rail */
.rail {
    display: flex;
    flex-direction: column;
    align-items: center;
    flex: none;
    gap: 16px;
    width: 67px;
    padding: 17px 0;
    color: #2b2b45;
}

.rail button {
    justify-content: center;
    width: 43px;
    height: 43px;
    border-radius: 9px;
    background: #fff;
    box-shadow: 0 1px 3px rgba(34, 36, 76, .15);
}

.rail svg {
    width: 20px;
    height: 20px;
}

.rail .on {
    background: var(--lilac);
    box-shadow: none;
}

.rail .rail-last {
    margin-top: auto;
}

/* Footer */
.footer {
    display: grid;
    grid-template-columns: 1fr auto 1fr;
    align-items: center;
    flex: none;
    height: 30px;
    padding: 0 12px 2px 8px;
    color: #e6e5f5;
    font-size: 13px;
}

.footer a {
    text-decoration: underline;
}

.footer nav {
    display: flex;
    align-items: center;
    justify-content: flex-end;
    gap: 8px;
}

.minimize {
    width: 12px;
    height: 2px;
    background: #fff;
}
```
